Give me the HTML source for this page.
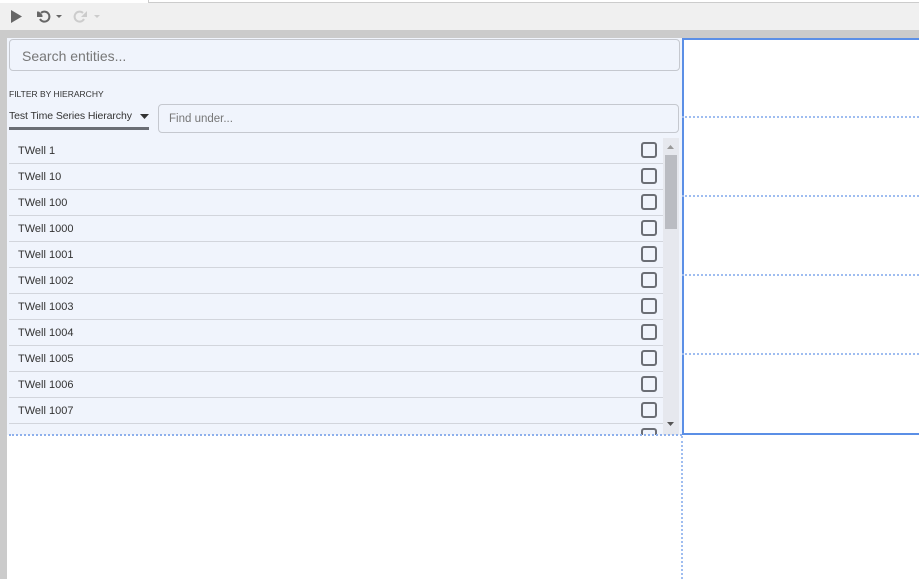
<!DOCTYPE html>
<html><head><style>
*{margin:0;padding:0;box-sizing:border-box}
body{width:919px;height:579px;overflow:hidden;background:#fff;font-family:"Liberation Sans",sans-serif;position:relative}
.a{position:absolute}
.row{position:absolute;left:9px;width:654px;height:26px;border-bottom:1px solid #d2d5dc;font-size:11px;color:#333;padding:7px 0 0 9px}
.cb{position:absolute;left:632px;top:4px;width:16px;height:16px;border:2px solid #6b6e75;border-radius:3px}
.hd{position:absolute;left:682px;width:237px;height:0;border-top:2px dotted #9fbdf0}
</style></head><body>
<div class="a" style="left:0;top:0;width:148px;height:3px;background:#fff"></div>
<div class="a" style="left:148px;top:0;width:771px;height:3px;background:#fff;border-bottom:1px solid #ccc;border-left:1px solid #ccc"></div>
<div class="a" style="left:0;top:3px;width:919px;height:27px;background:#f0f0f0"></div>
<svg class="a" style="left:8px;top:9px" width="100" height="16"><path d="M3 1L14 7.5L3 14Z" fill="#666"/>
<path d="M33 4a5 5 0 1 1 -1 6" stroke="#666" stroke-width="2" fill="none"/><path d="M29 2v6h6" fill="#666"/><path d="M30 3l4 4" stroke="#666" stroke-width="2"/><path d="M48 6h6l-3 3z" fill="#666"/>
<path d="M75 4a5 5 0 1 0 1 6" stroke="#ccc" stroke-width="2" fill="none"/><path d="M79 2v6h-6z" fill="#ccc"/><path d="M86 6h6l-3 3z" fill="#ccc"/></svg>
<div class="a" style="left:0;top:30px;width:919px;height:8px;background:#cbcbcb"></div>
<div class="a" style="left:0;top:30px;width:7px;height:549px;background:#cbcbcb"></div>
<div class="a" style="left:7px;top:38px;width:675px;height:397px;background:#f0f4fc"></div>
<div class="a" style="left:9px;top:39px;width:671px;height:32px;border:1px solid #c5c8cf;border-radius:4px;background:#f0f4fc;font-size:14px;color:#777;padding:8px 12px">Search entities...</div>
<div class="a" style="left:9px;top:89px;font-size:8.5px;color:#333">FILTER BY HIERARCHY</div>
<div class="a" style="left:9px;top:110px;font-size:10.5px;color:#333;letter-spacing:-0.1px">Test Time Series Hierarchy</div>
<svg class="a" style="left:140px;top:114px" width="10" height="6"><path d="M0 0h9l-4.5 5z" fill="#333"/></svg>
<div class="a" style="left:9px;top:127px;width:140px;height:3px;background:#6b6e75"></div>
<div class="a" style="left:158px;top:104px;width:521px;height:29px;border:1px solid #c5c8cf;border-radius:4px;font-size:11.5px;color:#777;padding:8px 10px">Find under...</div>
<div class="row" style="top:138px">TWell 1<div class="cb"></div></div>
<div class="row" style="top:164px">TWell 10<div class="cb"></div></div>
<div class="row" style="top:190px">TWell 100<div class="cb"></div></div>
<div class="row" style="top:216px">TWell 1000<div class="cb"></div></div>
<div class="row" style="top:242px">TWell 1001<div class="cb"></div></div>
<div class="row" style="top:268px">TWell 1002<div class="cb"></div></div>
<div class="row" style="top:294px">TWell 1003<div class="cb"></div></div>
<div class="row" style="top:320px">TWell 1004<div class="cb"></div></div>
<div class="row" style="top:346px">TWell 1005<div class="cb"></div></div>
<div class="row" style="top:372px">TWell 1006<div class="cb"></div></div>
<div class="row" style="top:398px">TWell 1007<div class="cb"></div></div>
<div class="a" style="left:9px;top:424px;width:654px;height:11px;overflow:hidden"><div class="cb" style="left:632px;top:4px"></div></div>
<div class="a" style="left:663px;top:138px;width:16px;height:297px;background:#e6e8ee"></div>
<div class="a" style="left:665px;top:155px;width:12px;height:74px;background:#babcc2"></div>
<svg class="a" style="left:666px;top:144px" width="10" height="6"><path d="M1 5h7l-3.5-4z" fill="#999"/></svg>
<svg class="a" style="left:666px;top:421px" width="10" height="6"><path d="M1 1h7l-3.5 4z" fill="#555"/></svg>
<div class="a" style="left:682px;top:38px;width:237px;height:397px;border-left:2px solid #5b8fe6;border-top:2px solid #5b8fe6;border-bottom:2px solid #5b8fe6"></div>
<div class="hd" style="top:116px"></div><div class="hd" style="top:195px"></div><div class="hd" style="top:274px"></div><div class="hd" style="top:353px"></div>
<div class="a" style="left:9px;top:434px;width:673px;border-top:2px dotted #8eb0ec"></div>
<div class="a" style="left:681px;top:436px;height:143px;border-left:2px dotted #9fbdf0"></div>
</body></html>
